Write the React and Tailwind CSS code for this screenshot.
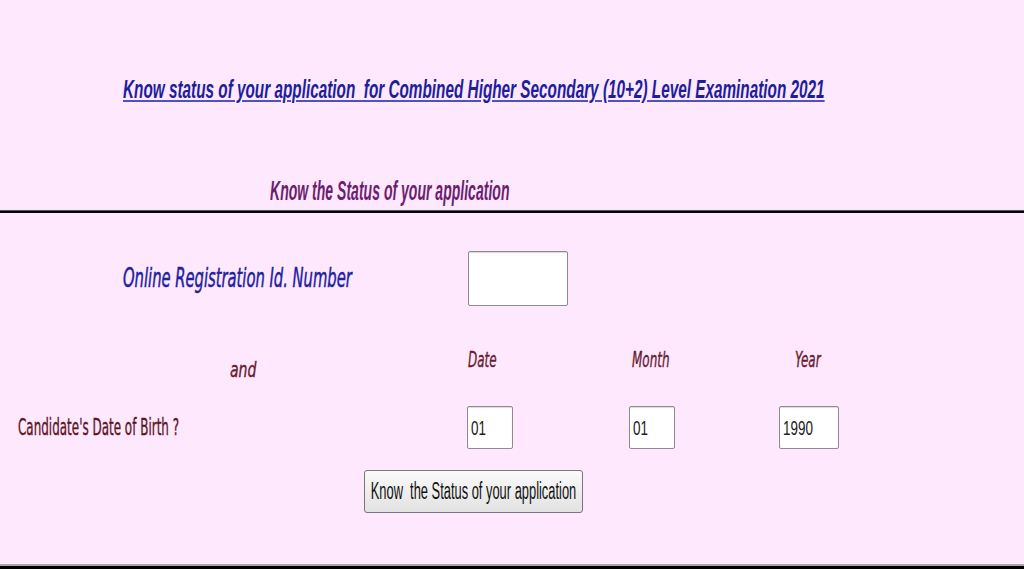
const arial = "font-['Liberation_Sans',Arial,sans-serif]";
const verdana = "font-['DejaVu_Sans',Verdana,sans-serif]";

const Box = ({ value, className }) => (
  <div
    className={`flex items-center bg-white border border-[#8c8c8c] rounded-[2px] shadow-[inset_0_1px_1px_rgba(0,0,0,0.15)] pl-[3px] text-[21px] text-[#222] ${arial} ${className}`}
  >
    <span className="inline-block origin-left scale-x-[0.64]">{value}</span>
  </div>
);

export default function App() {
  return (
    <div className="w-full h-[569px] bg-[#fde8fd] overflow-hidden flex flex-col">
      <div className="pt-[70px] pl-[123px] h-[108px]">
        <a
          href="#"
          className={`inline-block origin-left scale-x-[0.589] whitespace-nowrap text-[26px] font-bold italic underline decoration-[#5050c0] text-[#1e1e9c] ${arial}`}
        >
          Know status of your application&nbsp; for Combined Higher Secondary (10+2) Level Examination 2021
        </a>
      </div>

      <div className="pt-[63px] pl-[270px] h-[102px]">
        <span
          className={`inline-block origin-left scale-x-[0.52] whitespace-nowrap text-[27px] font-bold italic text-[#6e1e6e] ${arial}`}
        >
          Know the Status of your application
        </span>
      </div>

      <div className="h-[3px] bg-black border-t border-[#555]" />

      <div className="grid grid-cols-[468px_1fr] items-center h-[55px] mt-[38px]">
        <span
          className={`pl-[123px] whitespace-nowrap text-[26px] italic text-[#2020a0] [-webkit-text-stroke:0.5px_#2020a0] ${verdana}`}
        >
          <span className="inline-block origin-left scale-x-[0.567]">Online Registration Id. Number</span>
        </span>
        <Box value="" className="w-[100px] h-[55px]" />
      </div>

      <div className="grid grid-cols-[467px_162px_150px_1fr] mt-[39px] h-[34px] text-[#6a1a30] [-webkit-text-stroke:0.4px_#6a1a30]">
        <div className="pl-[230px] pt-[10px]">
          <span className={`inline-block origin-left scale-x-[0.67] text-[21px] italic ${verdana}`}>and</span>
        </div>
        <div className="pl-[1px]">
          <span className={`inline-block origin-left scale-x-[0.57] text-[21px] italic ${verdana}`}>Date</span>
        </div>
        <div className="pl-[3px]">
          <span className={`inline-block origin-left scale-x-[0.57] text-[21px] italic ${verdana}`}>Month</span>
        </div>
        <div className="pl-[16px]">
          <span className={`inline-block origin-left scale-x-[0.57] text-[21px] italic ${verdana}`}>Year</span>
        </div>
      </div>

      <div className="grid grid-cols-[467px_162px_150px_1fr] items-center mt-[27px] h-[43px]">
        <div className="pl-[18px]">
          <span className={`inline-block origin-left scale-x-[0.52] whitespace-nowrap text-[23px] text-[#5c1424] [-webkit-text-stroke:0.4px_#5c1424] ${verdana}`}>
            Candidate's Date of Birth ?
          </span>
        </div>
        <div>
          <Box value="01" className="w-[46px] h-[43px]" />
        </div>
        <div>
          <Box value="01" className="w-[46px] h-[43px]" />
        </div>
        <div>
          <Box value="1990" className="w-[60px] h-[43px]" />
        </div>
      </div>

      <div className="pl-[364px] mt-[21px]">
        <button
          className={`flex items-center justify-center w-[219px] h-[43px] border border-[#777] rounded-[3px] bg-gradient-to-b from-[#fafafa] to-[#e2e2e2] text-[#111] ${arial}`}
        >
          <span className="inline-block shrink-0 scale-x-[0.56] whitespace-nowrap text-[23px]">
            Know&nbsp; the Status of your application
          </span>
        </button>
      </div>

      <div className="mt-auto h-[5px] bg-black border-t-2 border-[#aaa]" />
    </div>
  );
}
